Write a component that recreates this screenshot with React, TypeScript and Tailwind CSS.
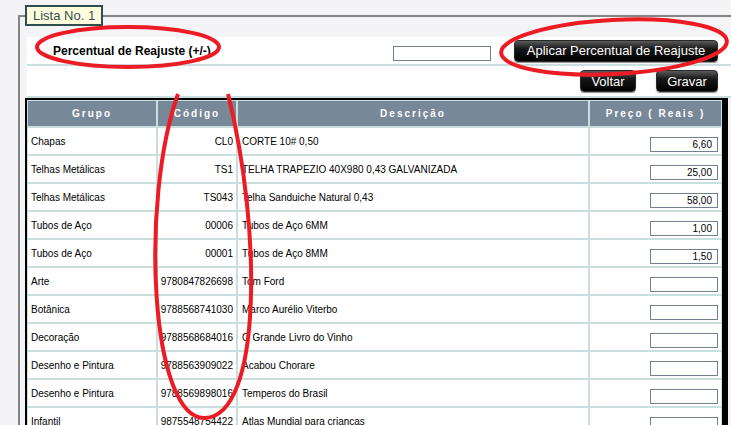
import React from "react";

type Row = { grupo: string; codigo: string; descricao: string; preco: string };

const rows: Row[] = [
  { grupo: "Chapas", codigo: "CL0", descricao: "CORTE 10# 0,50", preco: "6,60" },
  { grupo: "Telhas Metálicas", codigo: "TS1", descricao: "TELHA TRAPEZIO 40X980 0,43 GALVANIZADA", preco: "25,00" },
  { grupo: "Telhas Metálicas", codigo: "TS043", descricao: "Telha Sanduiche Natural 0,43", preco: "58,00" },
  { grupo: "Tubos de Aço", codigo: "00006", descricao: "Tubos de Aço 6MM", preco: "1,00" },
  { grupo: "Tubos de Aço", codigo: "00001", descricao: "Tubos de Aço 8MM", preco: "1,50" },
  { grupo: "Arte", codigo: "9780847826698", descricao: "Tom Ford", preco: "" },
  { grupo: "Botânica", codigo: "9788568741030", descricao: "Marco Aurélio Viterbo", preco: "" },
  { grupo: "Decoração", codigo: "9788568684016", descricao: "O Grande Livro do Vinho", preco: "" },
  { grupo: "Desenho e Pintura", codigo: "9788563909022", descricao: "Acabou Chorare", preco: "" },
  { grupo: "Desenho e Pintura", codigo: "9788569898016", descricao: "Temperos do Brasil", preco: "" },
  { grupo: "Infantil", codigo: "9875548754422", descricao: "Atlas Mundial para crianças", preco: "" },
  { grupo: "Infantil", codigo: "9788574061234", descricao: "Meu Primeiro Livro", preco: "" },
];

const btn =
  "h-[22px] rounded-[4px] border border-[#2a2a2a] bg-[linear-gradient(#5a5a5a,#161616_40%,#000)] text-[13px] leading-none text-white shadow-[0_1px_1px_rgba(0,0,0,0.45)]";

function Header({ children }: { children: React.ReactNode }) {
  return (
    <div className="flex h-[25px] items-center justify-center bg-[#778899] text-[10px] font-bold tracking-[2px] text-white">
      {children}
    </div>
  );
}

export default function App() {
  return (
    <div className="relative h-[425px] w-[731px] overflow-hidden bg-[#f4f4f6] font-['Liberation_Sans',Arial,sans-serif] text-black">
      <fieldset className="ml-[18px] mt-[5px] w-[740px] border-2 border-[#858585] pl-[5px] pt-[11px]">
        <legend className="h-[21px] border-2 border-[#2f4f4f] bg-[#ffffe0] px-[6px] text-[13px] leading-[17px] text-[#2f4f4f]">
          Lista No. 1
        </legend>

        <div className="ml-[2px] flex h-[29px] w-[708px] items-center border-b-2 border-[#c9dede] bg-white pl-[26px] pr-[17px]">
          <span className="text-[12px] font-bold">Percentual de Reajuste (+/-)</span>
          <input className="ml-auto mt-[6px] h-[15px] w-[98px] border border-[#708090] bg-white" />
          <button className={`${btn} ml-[23px] w-[204px]`}>Aplicar Percentual de Reajuste</button>
        </div>

        <div className="ml-[2px] flex h-[32px] w-[708px] justify-end gap-[20px] border-b-2 border-[#c9dede] bg-white pr-[17px] pt-[4px]">
          <button className={`${btn} w-[56px]`}>Voltar</button>
          <button className={`${btn} w-[62px]`}>Gravar</button>
        </div>

        <div className="grid w-[703px] grid-cols-[128px_78px_350px_131px] gap-[2px] border-l-2 border-r-[6px] border-t-2 border-black bg-[#c9dede] p-[1px] text-[10px]">
          <Header>Grupo</Header>
          <Header>Código</Header>
          <Header>Descrição</Header>
          <Header>Preço ( Reais )</Header>
          {rows.map((r, i) => (
            <React.Fragment key={i}>
              <div className="flex h-[26px] items-center bg-white pl-[3px]">{r.grupo}</div>
              <div className="flex h-[26px] items-center justify-end bg-white pr-[3px]">{r.codigo}</div>
              <div className="flex h-[26px] items-center bg-white pl-[4px]">{r.descricao}</div>
              <div className="flex h-[26px] items-end justify-end bg-white pb-[2px] pr-[3px]">
                <input
                  readOnly
                  value={r.preco}
                  className="h-[15px] w-[68px] border border-[#708090] bg-white pr-[5px] text-right text-[10px] leading-none"
                />
              </div>
            </React.Fragment>
          ))}
        </div>
      </fieldset>

      <svg
        className="pointer-events-none absolute left-0 top-0"
        width="731"
        height="425"
        viewBox="0 0 731 425"
        fill="none"
        stroke="#ed1c24"
        strokeWidth="4"
      >
        <ellipse cx="128" cy="47" rx="91" ry="20" />
        <ellipse cx="614" cy="47" rx="113" ry="27" transform="rotate(-3 614 47)" />
        <path d="M 178 94 C 140 200, 150 420, 205 418 C 262 416, 262 230, 228 94" />
      </svg>
    </div>
  );
}
